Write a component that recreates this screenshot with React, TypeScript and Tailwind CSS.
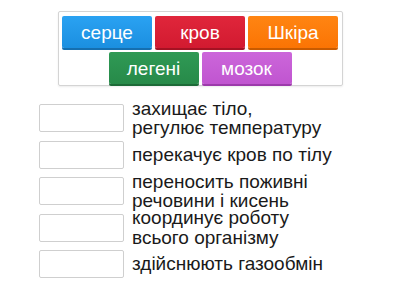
import React from "react";

const tiles = [
  { t: "серце", c: "bg-gradient-to-b from-[#2aa2f2] to-[#1b8fe0] shadow-[0_2px_0_#156fb0]" },
  { t: "кров", c: "bg-gradient-to-b from-[#e0263b] to-[#d21a30] shadow-[0_2px_0_#a51223]" },
  { t: "Шкіра", c: "bg-gradient-to-b from-[#ff8512] to-[#fb7404] shadow-[0_2px_0_#c95b00]" },
  { t: "легені", c: "bg-gradient-to-b from-[#2f9a55] to-[#278a49] shadow-[0_2px_0_#1c6a37]" },
  { t: "мозок", c: "bg-gradient-to-b from-[#cc66da] to-[#c055d0] shadow-[0_2px_0_#9c3aab]" },
];

const rows: string[][] = [
  ["захищає тіло,", "регулює температуру"],
  ["перекачує кров по тілу"],
  ["переносить поживні", "речовини і кисень"],
  ["координує роботу", "всього організму"],
  ["здійснюють газообмін"],
];

export default function App() {
  return (
    <div
      className="w-[400px] h-[300px] bg-white overflow-hidden"
      style={{ fontFamily: '"Liberation Sans", Arial, sans-serif' }}
    >
      <div className="pt-[11px]">
        <div className="mx-auto w-[285px] border border-[#d4d4d4] rounded-[2px] pt-[4px] pb-[1px] px-[3px] flex flex-wrap justify-center gap-x-[3px] gap-y-[4px] shadow-[0_1px_2px_rgba(0,0,0,0.08)]">
          {tiles.map((x) => (
            <div
              key={x.t}
              className={`w-[90px] h-[32px] rounded-[2px] flex items-center justify-center text-white text-[19px] leading-none ${x.c}`}
            >
              {x.t}
            </div>
          ))}
        </div>
      </div>
      <div className="pt-[13.75px] pl-[39px] flex flex-col">
        {rows.map((r, i) => (
          <div key={i} className="h-[36.5px] flex items-center gap-[8px]">
            <div className="w-[85px] h-[28px] shrink-0 border border-[#cfcfcf] rounded-[2px] bg-white" />
            <div className="text-[19px] leading-[19.5px] text-[#1a1a1a] whitespace-nowrap">
              {r.map((l, j) => (
                <div key={j}>{l}</div>
              ))}
            </div>
          </div>
        ))}
      </div>
    </div>
  );
}
